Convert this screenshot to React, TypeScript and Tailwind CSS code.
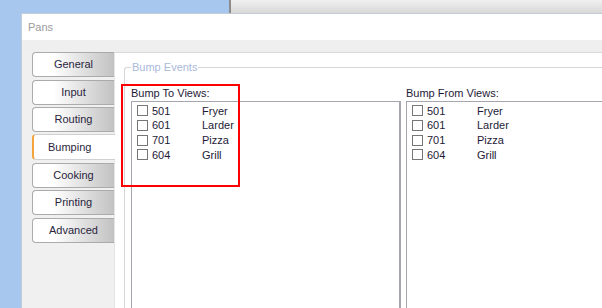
import React from "react";

const tabs = ["General", "Input", "Routing", "Bumping", "Cooking", "Printing", "Advanced"];
const views = [
  { id: "501", name: "Fryer" },
  { id: "601", name: "Larder" },
  { id: "701", name: "Pizza" },
  { id: "604", name: "Grill" },
];

function ViewList({ label }: { label: string }) {
  return (
    <div className="flex w-[270px] shrink-0 flex-col">
      <div className="mb-[1px] h-[14px] leading-[14px] text-[#1e1a36]">{label}</div>
      <div className="h-[220px] border border-r-2 border-[#a6a6ae] bg-white pl-[5px] pt-[1.5px]">
        {views.map((v) => (
          <div key={v.id} className="flex h-[14.67px] items-center text-[#1e1a36]">
            <div className="h-[11px] w-[11px] shrink-0 border border-[#767676] bg-white" />
            <div className="ml-[4px] w-[50px] leading-[14px]">{v.id}</div>
            <div className="leading-[14px]">{v.name}</div>
          </div>
        ))}
      </div>
    </div>
  );
}

export default function App() {
  return (
    <div className="relative flex h-[308px] w-[602px] flex-col overflow-hidden bg-[#a7c7ee] font-['Liberation_Sans',Arial,sans-serif] text-[11px]">
      {/* background windows strip */}
      <div className="flex h-[13px] shrink-0">
        <div className="w-[229px] shrink-0" />
        <div className="w-[2px] shrink-0 bg-[#8c8c8c]" />
        <div className="flex-1 bg-linear-to-b from-[#f0f0f0] to-[#d8d8d8]" />
      </div>
      <div className="flex min-h-0 flex-1">
        <div className="w-[21px] shrink-0" />
        {/* dialog */}
        <div className="flex min-w-0 flex-1 flex-col border-l border-t border-[#c3ccd8] bg-white">
          <div className="flex h-[26px] shrink-0 items-center pl-[6px] text-[11px] text-[#9c9c9c]">Pans</div>
          <div className="h-[12px] shrink-0 bg-[#efefef]" />
          <div className="flex min-h-0 flex-1">
            {/* tab panel */}
            <div className="flex w-[92px] shrink-0 flex-col gap-[2.5px] bg-[#f0f0f0] pl-[10px]">
              {tabs.map((t) =>
                t === "Bumping" ? (
                  <div
                    key={t}
                    className="relative z-10 -mr-[1px] flex h-[26px] -mt-[0.5px] items-center rounded-l-[4px] border-y border-l-2 border-y-[#d0d0d0] border-l-[#f3a43a] bg-white pl-[14px] text-[#2a1f3d]"
                  >
                    {t}
                  </div>
                ) : (
                  <div
                    key={t}
                    className="flex h-[25px] items-center justify-center rounded-l-[4px] border border-r-0 border-[#ababab] bg-linear-to-r from-white from-25% to-[#c2c2c2] text-[#2a1f3d]"
                  >
                    {t}
                  </div>
                )
              )}
            </div>
            {/* content */}
            <div className="flex min-w-0 flex-1 flex-col border-l border-t border-l-[#e4e4e4] border-t-[#d9d9d9] bg-white">
              <fieldset className="ml-[9px] mt-[7px] flex-1 rounded-tl-[3px] border-l border-t border-[#d6d6d6] pl-[6px] pt-[12px]">
                <legend className="px-[1px] leading-[14px] text-[#a9b9d9]">Bump Events</legend>
                <div className="flex gap-[5px]">
                  <ViewList label="Bump To Views:" />
                  <ViewList label="Bump From Views:" />
                </div>
              </fieldset>
            </div>
          </div>
        </div>
      </div>
      {/* annotation highlight */}
      <div className="pointer-events-none absolute left-[121px] top-[84px] h-[103px] w-[119px] border-2 border-[#ff0000]" />
    </div>
  );
}
